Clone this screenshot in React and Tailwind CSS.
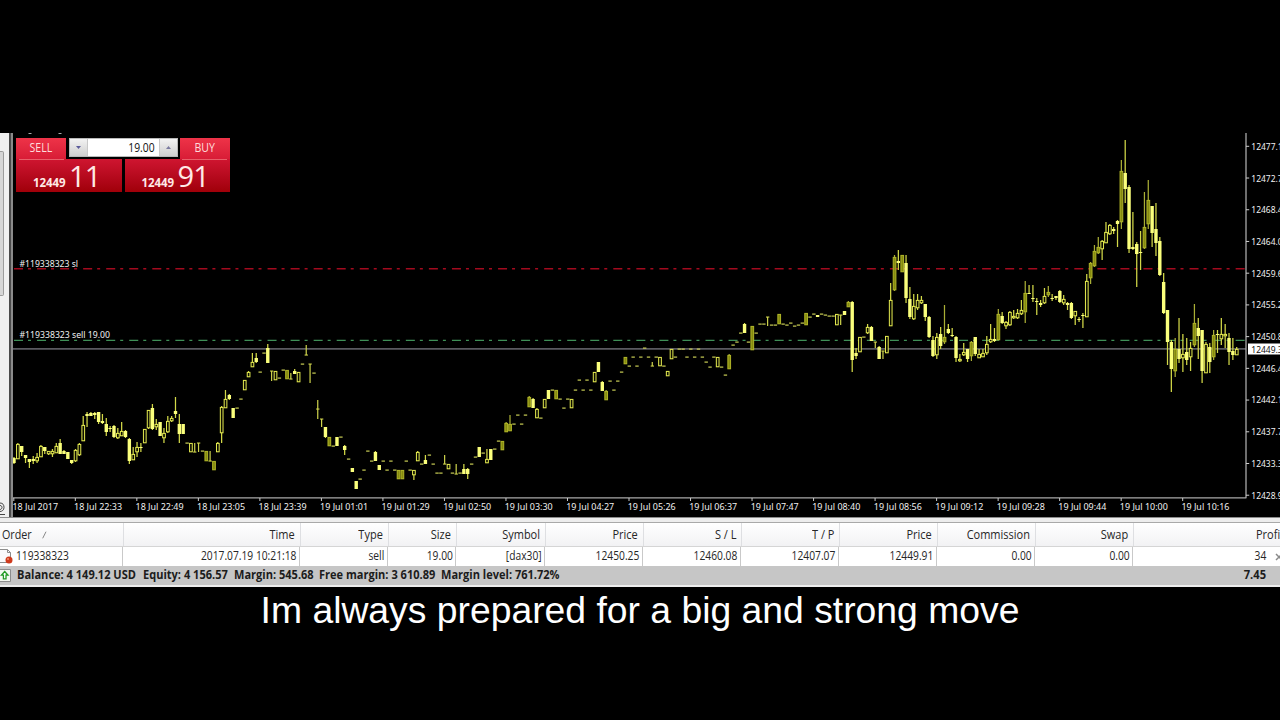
import React from 'react';

// chart geometry
const X0 = 14;
const STEP = 3.845;

// [slot, high, bodyTop, bodyBottom, low, kind]  f = filled, h = hollow, d = dim body
const candles = [
  [0, 457, 458, 463, 464, 'f'], [1, 443, 444, 459, 459, 'h'], [2, 446, 446, 452, 456, 'f'], [3, 455, 455, 458, 463, 'f'],
  [4, 459, 459, 462, 468, 'f'], [5, 456, 459, 461, 464, 'f'], [6, 453, 457, 461, 463, 'h'], [7, 445, 446, 457, 457, 'h'],
  [8, 447, 447, 451, 454, 'f'], [9, 451, 451, 454, 455, 'h'], [10, 449, 451, 454, 457, 'h'], [11, 443, 446, 453, 453, 'h'],
  [12, 439, 443, 454, 454, 'f'], [13, 450, 451, 454, 454, 'f'], [14, 452, 452, 459, 459, 'f'], [15, 460, 460, 463, 464, 'f'],
  [16, 449, 450, 461, 462, 'h'], [17, 443, 444, 455, 456, 'h'], [18, 416, 425, 441, 441, 'h'], [19, 412, 414, 416, 427, 'f'],
  [20, 412, 413, 416, 416, 'f'], [21, 412, 413, 415, 419, 'f'], [22, 412, 412, 422, 424, 'f'], [23, 414, 421, 423, 424, 'f'],
  [24, 418, 424, 432, 436, 'f'], [25, 426, 428, 429, 432, 'f'], [26, 425, 426, 437, 438, 'f'], [27, 428, 433, 438, 439, 'h'],
  [28, 422, 431, 436, 436, 'h'], [29, 430, 431, 437, 438, 'f'], [30, 438, 439, 461, 464, 'f'], [31, 447, 454, 460, 460, 'h'],
  [32, 442, 447, 452, 457, 'h'], [33, 443, 447, 448, 452, 'f'], [34, 429, 429, 443, 443, 'h'], [35, 410, 410, 428, 429, 'h'],
  [36, 404, 408, 429, 430, 'f'], [37, 419, 424, 427, 430, 'h'], [38, 422, 422, 436, 436, 'f'], [39, 428, 433, 438, 443, 'h'],
  [40, 416, 421, 432, 433, 'h'], [41, 416, 418, 421, 422, 'h'], [42, 397, 411, 414, 418, 'f'], [43, 414, 424, 434, 443, 'f'],
  [44, 424, 424, 434, 434, 'f'], [46, 443, 443, 452, 452, 'h'], [50, 451, 451, 461, 461, 'd'], [52, 461, 461, 470, 470, 'd'],
  [53, 442, 443, 452, 452, 'h'], [54, 406, 407, 433, 443, 'h'], [55, 390, 399, 408, 408, 'h'], [56, 394, 395, 399, 400, 'f'],
  [57, 408, 408, 418, 418, 'f'], [60, 380, 380, 390, 390, 'h'], [61, 371, 372, 377, 377, 'h'], [62, 353, 362, 367, 367, 'h'],
  [63, 353, 358, 362, 363, 'f'], [66, 344, 348, 363, 363, 'f'], [68, 371, 371, 380, 380, 'h'], [71, 370, 370, 379, 379, 'd'],
  [73, 369, 371, 374, 374, 'f'], [74, 372, 372, 382, 382, 'h'], [81, 427, 427, 437, 438, 'f'], [82, 437, 437, 446, 446, 'd'],
  [84, 437, 437, 446, 446, 'f'], [86, 445, 446, 450, 455, 'f'], [88, 468, 468, 472, 472, 'f'], [89, 481, 481, 489, 489, 'f'],
  [94, 451, 452, 461, 461, 'f'], [95, 465, 465, 470, 470, 'f'], [100, 470, 470, 479, 479, 'd'], [101, 470, 470, 479, 479, 'd'],
  [104, 470, 470, 475, 480, 'h'], [105, 451, 452, 461, 461, 'h'], [107, 455, 460, 464, 464, 'f'], [113, 464, 464, 469, 469, 'h'],
  [117, 464, 469, 474, 474, 'f'], [118, 468, 469, 474, 479, 'f'], [121, 447, 447, 457, 457, 'f'], [123, 449, 459, 463, 463, 'h'],
  [124, 449, 449, 460, 460, 'f'], [127, 441, 441, 450, 450, 'd'], [128, 422, 423, 432, 432, 'd'], [129, 415, 424, 431, 431, 'd'],
  [134, 396, 397, 407, 407, 'd'], [135, 398, 399, 408, 408, 'f'], [136, 408, 409, 418, 418, 'h'], [138, 399, 399, 408, 408, 'h'],
  [139, 390, 390, 399, 399, 'f'], [141, 390, 390, 399, 399, 'd'], [145, 399, 399, 408, 408, 'h'], [151, 372, 372, 382, 382, 'h'],
  [152, 362, 362, 372, 372, 'f'], [153, 381, 382, 391, 391, 'f'], [154, 390, 391, 400, 400, 'd'], [159, 357, 357, 364, 364, 'd'],
  [168, 357, 357, 366, 366, 'h'], [170, 371, 371, 376, 376, 'h'], [171, 349, 349, 359, 359, 'h'], [183, 357, 357, 367, 367, 'h'],
  [186, 354, 355, 369, 369, 'd'], [190, 323, 324, 333, 333, 'f'], [192, 326, 326, 350, 350, 'd'], [199, 314, 314, 324, 324, 'd'],
  [206, 313, 313, 325, 325, 'd'], [209, 315, 315, 317, 317, 'f'], [214, 314, 314, 325, 325, 'h'], [216, 311, 311, 315, 315, 'f'],
  [217, 301, 302, 307, 307, 'd'], [218, 301, 302, 360, 372, 'f'], [219, 348, 353, 356, 359, 'f'], [220, 337, 337, 352, 352, 'h'],
  [222, 324, 327, 333, 334, 'h'], [223, 326, 327, 341, 341, 'f'], [225, 346, 347, 359, 359, 'f'], [227, 336, 336, 353, 353, 'h'],
  [228, 283, 300, 326, 326, 'h'], [229, 255, 257, 290, 291, 'd'], [230, 250, 261, 263, 270, 'f'], [231, 255, 255, 272, 272, 'd'],
  [232, 255, 263, 298, 303, 'f'], [233, 287, 299, 317, 319, 'f'], [234, 294, 306, 319, 320, 'h'], [235, 294, 300, 308, 310, 'h'],
  [236, 296, 300, 303, 304, 'h'], [237, 304, 304, 317, 321, 'f'], [238, 316, 317, 337, 338, 'f'], [239, 336, 340, 356, 357, 'f'],
  [240, 333, 337, 355, 359, 'h'], [241, 327, 334, 346, 349, 'f'], [242, 305, 337, 342, 344, 'd'], [243, 324, 329, 333, 334, 'f'],
  [244, 328, 335, 336, 337, 'f'], [245, 336, 337, 358, 362, 'f'], [246, 354, 359, 361, 362, 'h'], [247, 343, 352, 355, 356, 'h'],
  [248, 349, 349, 359, 362, 'f'], [249, 341, 342, 356, 361, 'd'], [250, 337, 337, 354, 356, 'f'], [251, 349, 354, 358, 358, 'h'],
  [252, 349, 353, 357, 357, 'h'], [253, 336, 344, 353, 355, 'h'], [254, 324, 339, 342, 343, 'h'], [255, 328, 339, 341, 342, 'f'],
  [256, 309, 314, 340, 340, 'd'], [257, 312, 316, 323, 324, 'f'], [258, 321, 322, 326, 329, 'h'], [259, 311, 312, 325, 326, 'h'],
  [260, 310, 316, 318, 319, 'h'], [261, 309, 313, 318, 319, 'h'], [262, 300, 310, 314, 315, 'h'], [263, 281, 293, 312, 323, 'd'],
  [264, 285, 293, 294, 294, 'f'], [265, 285, 298, 299, 302, 'f'], [266, 298, 301, 302, 315, 'f'], [267, 300, 303, 305, 307, 'f'],
  [268, 288, 296, 303, 304, 'h'], [269, 286, 292, 295, 297, 'd'], [270, 294, 298, 299, 301, 'f'], [271, 296, 296, 298, 300, 'f'],
  [272, 290, 291, 302, 303, 'f'], [273, 295, 299, 303, 305, 'h'], [274, 302, 303, 305, 310, 'f'], [275, 302, 303, 318, 319, 'f'],
  [276, 311, 311, 316, 325, 'h'], [277, 317, 319, 320, 322, 'f'], [278, 313, 315, 316, 328, 'f'], [279, 274, 281, 317, 317, 'h'],
  [280, 262, 263, 278, 284, 'd'], [281, 245, 251, 266, 267, 'd'], [282, 237, 247, 253, 254, 'd'], [283, 240, 241, 249, 260, 'h'],
  [284, 222, 232, 243, 243, 'h'], [285, 224, 225, 234, 235, 'h'], [286, 227, 229, 231, 234, 'f'], [287, 220, 221, 224, 247, 'f'],
  [288, 160, 171, 222, 229, 'd'], [289, 140, 173, 189, 203, 'f'], [290, 185, 187, 249, 253, 'f'], [291, 212, 247, 249, 250, 'f'],
  [292, 242, 244, 254, 287, 'f'], [293, 231, 252, 253, 270, 'f'], [294, 192, 227, 248, 249, 'd'], [295, 180, 200, 224, 229, 'd'],
  [296, 206, 206, 233, 247, 'f'], [297, 203, 229, 243, 256, 'f'], [298, 237, 241, 275, 276, 'f'], [299, 273, 282, 313, 314, 'f'],
  [300, 310, 310, 342, 365, 'f'], [301, 340, 342, 369, 392, 'f'], [302, 338, 349, 371, 377, 'd'], [303, 318, 349, 359, 363, 'f'],
  [304, 334, 354, 358, 372, 'h'], [305, 338, 352, 360, 365, 'f'], [306, 342, 348, 357, 371, 'h'], [307, 304, 323, 345, 347, 'd'],
  [308, 318, 328, 336, 359, 'f'], [309, 330, 330, 371, 383, 'f'], [310, 342, 344, 373, 373, 'h'], [311, 343, 347, 362, 373, 'f'],
  [312, 330, 335, 357, 360, 'd'], [313, 330, 334, 335, 353, 'f'], [314, 318, 334, 339, 345, 'h'], [315, 324, 334, 336, 348, 'h'],
  [316, 333, 338, 352, 365, 'f'], [317, 338, 351, 355, 360, 'f'], [318, 347, 349, 355, 355, 'h'],
];

// bars without a body: [slot, high, low, crossbar]
const wicks = [
  [47, 443, 452, 452], [48, 443, 452, 443], [51, 451, 461, 461], [67, 371, 381, 371], [72, 373, 379, 379], [76, 345, 355, 355],
  [77, 364, 383, 364], [79, 400, 419, 409], [80, 419, 427, 419], [112, 455, 464, 464], [115, 464, 474, 474], [166, 362, 366, 366],
  [196, 317, 326, 317], [215, 315, 325, 315], [224, 342, 348, 342], [226, 351, 359, 351],
];

// single tick bars: [slot, y]
const dashes = [
  [45, 443], [49, 451], [58, 408], [59, 399], [64, 372], [65, 353], [69, 378], [70, 370], [75, 364], [78, 373], [83, 446], [85, 437],
  [87, 459], [90, 479], [91, 470], [92, 451], [93, 461], [96, 461], [97, 470], [98, 461], [99, 470], [102, 461], [103, 470],
  [106, 464], [108, 455], [109, 464], [110, 473], [111, 473], [114, 473], [116, 473], [119, 464], [120, 457], [122, 453], [125, 449],
  [126, 441], [130, 424], [131, 415], [132, 424], [133, 415], [137, 418], [140, 390], [142, 399], [143, 408], [144, 399], [146, 390],
  [147, 380], [148, 390], [149, 380], [150, 390], [155, 381], [156, 390], [157, 381], [158, 372], [160, 366], [161, 357], [162, 366],
  [163, 357], [164, 348], [165, 357], [167, 357], [169, 366], [172, 357], [173, 349], [174, 349], [175, 357], [176, 349], [177, 357],
  [178, 349], [179, 357], [180, 362], [181, 367], [182, 357], [184, 367], [185, 375], [187, 345], [188, 342], [189, 333], [191, 342],
  [193, 333], [194, 324], [195, 324], [197, 325], [198, 325], [200, 324], [201, 325], [202, 323], [203, 326], [204, 325], [205, 323],
  [207, 317], [208, 314], [210, 314], [211, 315], [212, 316], [213, 316], [221, 337],
];

const times = [
  '18 Jul 2017', '18 Jul 22:33', '18 Jul 22:49', '18 Jul 23:05', '18 Jul 23:39', '19 Jul 01:01', '19 Jul 01:29',
  '19 Jul 02:50', '19 Jul 03:30', '19 Jul 04:27', '19 Jul 05:26', '19 Jul 06:37', '19 Jul 07:47', '19 Jul 08:40',
  '19 Jul 08:56', '19 Jul 09:12', '19 Jul 09:28', '19 Jul 09:44', '19 Jul 10:00', '19 Jul 10:16',
];

const prices = [
  '12477.15', '12472.75', '12468.40', '12464.00', '12459.60', '12455.25', '12450.85', '12446.45', '12442.10', '12437.70', '12433.30', '12428.95',
];

const columns = [
  { title: 'Time', value: '2017.07.19 10:21:18', width: 'w-[177px]' },
  { title: 'Type', value: 'sell', width: 'w-[88px]' },
  { title: 'Size', value: '19.00', width: 'w-[68px]' },
  { title: 'Symbol', value: '[dax30]', width: 'w-[89px]' },
  { title: 'Price', value: '12450.25', width: 'w-[98px]' },
  { title: 'S / L', value: '12460.08', width: 'w-[98px]' },
  { title: 'T / P', value: '12407.07', width: 'w-[98px]' },
  { title: 'Price', value: '12449.91', width: 'w-[98px]' },
  { title: 'Commission', value: '0.00', width: 'w-[98px]' },
  { title: 'Swap', value: '0.00', width: 'w-[98px]' },
];

function Candle({ data }) {
  const [slot, high, top, bottom, low, kind] = data;
  const x = X0 + slot * STEP;
  const fill = kind === 'f' ? '#fbff7c' : kind === 'd' ? '#858a10' : '#0c0d00';
  const stroke = kind === 'd' ? '#b0b528' : '#e6ec50';
  return (
    <g>
      <line x1={x} x2={x} y1={high} y2={low} stroke={kind === 'd' ? '#a9ae35' : '#d3d948'} strokeWidth="1.25" />
      {kind === 'f' ? (
        <rect x={x - 1.7} y={top} width="3.4" height={Math.max(bottom - top, 1)} fill={fill} />
      ) : (
        <rect x={x - 1.3} y={top + 0.4} width="2.7" height={Math.max(bottom - top - 0.6, 1)} fill={fill} stroke={stroke} strokeWidth="1" />
      )}
    </g>
  );
}

function Chart() {
  return (
    <svg className="block h-[384px] w-[1267px] shrink-0 bg-black" viewBox="13 133 1267 384" fontFamily="'Noto Sans', 'Open Sans', sans-serif" fontSize="9.5">
      {/* clipped title */}
      <path d="M28.5 133.5h3M58.5 133.5h3" stroke="#aaa" />

      {/* order and bid levels */}
      <line x1="14" x2="1245" y1="268.8" y2="268.8" stroke="#a30a1e" strokeWidth="1.4" strokeDasharray="9 5 3 6.05" />
      <line x1="14" x2="1245" y1="340.4" y2="340.4" stroke="#3f8f57" strokeWidth="1.3" strokeDasharray="9 5 3 6.05" />
      <line x1="13" x2="1246" y1="348.9" y2="348.9" stroke="#5a5a60" strokeWidth="1.6" />

      {/* bars */}
      {dashes.map(([slot, y]) => (
        <rect key={slot} x={X0 + slot * STEP - 1.6} y={y - 0.5} width="3.4" height="1.2" fill="#c9ce55" />
      ))}
      {wicks.map(([slot, high, low, bar]) => (
        <g key={slot} fill="#cfd44c">
          <rect x={X0 + slot * STEP - 0.6} y={high} width="1.2" height={low - high} />
          <rect x={X0 + slot * STEP - 1.6} y={bar - 0.5} width="3.3" height="1.1" />
        </g>
      ))}
      {candles.map((c) => (
        <Candle key={c[0]} data={c} />
      ))}

      {/* level labels */}
      <g fill="#f0f0f0">
        <text x="19.5" y="266.8" textLength="58.5" lengthAdjust="spacingAndGlyphs">#119338323 sl</text>
        <text x="19.5" y="338.2" textLength="90.5" lengthAdjust="spacingAndGlyphs">#119338323 sell 19.00</text>
      </g>

      {/* axes */}
      <path d="M13 497.9H1246.4M1246 133V498" fill="none" stroke="#a8a8a8" strokeWidth="1.3" />
      <g fill="#f0f0f0">
        {times.map((t, i) => (
          <g key={t}>
            <rect x={13.3 + i * 61.52} y="498" width="1" height="3" fill="#ccc" />
            <text x={12.5 + i * 61.52} y="510.2" textLength={i === 0 ? 45.5 : 48} lengthAdjust="spacingAndGlyphs">{t}</text>
          </g>
        ))}
        {prices.map((p, i) => (
          <g key={p}>
            <rect x="1246" y={145.8 + i * 31.72} width="3.2" height="1" fill="#ccc" />
            <text x="1251.3" y={149.8 + i * 31.7} textLength="36.2" lengthAdjust="spacingAndGlyphs">{p}</text>
          </g>
        ))}
      </g>
      <rect x="1248" y="343.5" width="32" height="11" fill="#fff" />
      <text x="1251.3" y="352.5" fill="#111" textLength="36.2" lengthAdjust="spacingAndGlyphs">12449.31</text>
    </svg>
  );
}

function QuoteButton({ base, pips }) {
  return (
    <div className="flex h-[33px] flex-1 items-baseline gap-[2px] bg-linear-to-b from-[#cf1530] to-[#a00008] pl-[17px] leading-[33px] text-[#ffe9e6]">
      <span className="w-[34px] text-[11.5px] font-bold tracking-[-0.1px]">{base}</span>
      <span className="text-[29px] tracking-[-0.8px]">{pips}</span>
    </div>
  );
}

function OneClickPanel() {
  return (
    <div className="absolute left-[16px] top-[5px] w-[214px] font-['Open_Sans',sans-serif]">
      <div className="flex h-[21px] justify-between">
        <div className="h-[21px] w-[50px] bg-linear-to-b from-[#ee3348] to-[#d81c36] text-center text-[12px] leading-[20px] text-[#ffdcdc]">
          <span className="inline-block scale-x-[0.88]">SELL</span>
        </div>
        <div className="flex h-[19px] w-[109px] border border-[#b8b8b8] bg-white">
          <div className="flex w-[18px] items-center justify-center border-r border-[#c8c8c8] bg-linear-to-b from-[#f2f2f2] to-[#cfcfcf]">
            <svg width="5" height="3" viewBox="0 0 5 3"><path d="M0 0h5L2.5 3z" fill="#5a5a9a" /></svg>
          </div>
          <div className="flex-1 pr-[4px] text-right text-[12px] leading-[17px] text-[#111]">
            <span className="inline-block origin-right scale-x-[0.86]">19.00</span>
          </div>
          <div className="flex w-[18px] items-center justify-center border-l border-[#c8c8c8] bg-linear-to-b from-[#f2f2f2] to-[#cfcfcf]">
            <svg width="5" height="3" viewBox="0 0 5 3"><path d="M0 3h5L2.5 0z" fill="#7a7aa0" /></svg>
          </div>
        </div>
        <div className="h-[21px] w-[50px] bg-linear-to-b from-[#ee3348] to-[#d81c36] text-center text-[12px] leading-[20px] text-[#ffdcdc]">
          <span className="inline-block scale-x-[0.88]">BUY</span>
        </div>
      </div>
      <div className="relative z-10 flex justify-between">
        <div className="ml-[3px] h-px w-[45px] bg-[#e8606a]" />
        <div className="mr-[3px] h-px w-[45px] bg-[#e8606a]" />
      </div>
      <div className="-mt-px flex gap-[3px]">
        <QuoteButton base="12449" pips="11" />
        <QuoteButton base="12449" pips="91" />
      </div>
    </div>
  );
}

function Terminal() {
  return (
    <section className="h-[70px] overflow-hidden bg-[#ededed] font-['Open_Sans',sans-serif] text-[12.5px] text-[#262626]">
      <div className="h-[6px] border-b border-t border-b-[#a9a9a9] border-t-[#8c8c8c]" />

      {/* Column titles */}
      <div className="flex h-[24px] w-[1340px] border-b border-[#d5d5d5] bg-linear-to-b from-white to-[#f2f2f4] leading-[23px]">
        <div className="flex w-[124px] shrink-0 border-r border-[#dedfe2] pl-[2px]">
          <span className="w-[40px] origin-left scale-x-[0.86]">Order</span>
          <svg className="mt-[8px]" width="5" height="8" viewBox="0 0 5 8"><path d="M.7 7.3 4 .7" stroke="#888" fill="none" /></svg>
        </div>
        {columns.map((c, i) => (
          <div key={i} className={`${c.width} shrink-0 border-r border-[#dedfe2] pr-[5px] text-right`}>
            <span className="inline-block origin-right scale-x-[0.88]">{c.title}</span>
          </div>
        ))}
        <div className="pl-[122px]">
          <span className="inline-block origin-left scale-x-[0.88]">Profit</span>
        </div>
      </div>

      {/* Open order */}
      <div className="flex h-[19px] w-[1340px] bg-white leading-[18px]">
        <div className="flex w-[123px] shrink-0 border-r border-[#c9c9c9]">
          <svg className="mr-[3px] shrink-0" width="13" height="19" viewBox="0 0 13 19">
            <path d="M0 2.5h7.5l3 3v10H0" fill="#fafafa" stroke="#8d8d8d" />
            <path d="M7.5 2.5v3h3" fill="none" stroke="#8d8d8d" />
            <circle cx="9" cy="13" r="3.5" fill="#cf3a1c" />
            <circle cx="8" cy="12" r="1.1" fill="#f08a6a" />
          </svg>
          <span className="origin-left scale-x-[0.82]">119338323</span>
        </div>
        {columns.map((c, i) => (
          <div key={i} className={`flex ${c.width} shrink-0 justify-end border-r border-[#c9c9c9] pr-[2.5px]`}>
            <span className="origin-right scale-x-[0.82] whitespace-nowrap">{c.value}</span>
          </div>
        ))}
        <div className="w-[133px] text-right">
          <span className="inline-block origin-right scale-x-[0.82]">34</span>
        </div>
        <svg className="ml-[9px] mt-[6px]" width="8" height="8" viewBox="0 0 8 8"><path d="m1 1 6 6M7 1 1 7" stroke="#8a8a8a" strokeWidth="1.5" /></svg>
      </div>

      {/* Account summary */}
      <div className="flex h-[19px] bg-[#c6c6c6] text-[12px] font-bold leading-[18px] text-[#1c1c1c]">
        <svg className="mr-[6px] shrink-0" width="11" height="19" viewBox="0 0 11 19">
          <path d="M0 3.5h10.5v12H0" fill="#f4f8f0" stroke="#8d8d8d" />
          <path d="M4.7 5.5 8 9.2H6v3.6H3.4V9.2h-2z" fill="#fff" stroke="#239b23" strokeWidth="1.3" />
        </svg>
        <div className="w-[126px] whitespace-nowrap"><span className="inline-block origin-left scale-x-[0.92]">Balance: 4 149.12 USD</span></div>
        <div className="w-[90.5px] whitespace-nowrap"><span className="inline-block origin-left scale-x-[0.92]">Equity: 4 156.57</span></div>
        <div className="w-[85.5px] whitespace-nowrap"><span className="inline-block origin-left scale-x-[0.92]">Margin: 545.68</span></div>
        <div className="w-[122px] whitespace-nowrap"><span className="inline-block origin-left scale-x-[0.92]">Free margin: 3 610.89</span></div>
        <div className="whitespace-nowrap"><span className="inline-block origin-left scale-x-[0.92]">Margin level: 761.72%</span></div>
        <div className="ml-auto pr-[14px]"><span className="inline-block origin-right scale-x-[0.93]">7.45</span></div>
      </div>
    </section>
  );
}

export default function App() {
  return (
    <div className="h-[720px] w-[1280px] overflow-hidden bg-black pt-[133px]">
      {/* Chart window */}
      <main className="relative flex h-[384px]">
        <aside className="flex w-[13px] shrink-0 bg-[#f0f0f0]">
          <div className="flex w-[9px] flex-col">
            <div className="h-[18px]" />
            <div className="h-[145px] w-[4px] rounded-r-[2px] border border-l-0 border-[#9c9c9c] bg-[#d6d6d6]" />
            <svg className="mt-[204px]" width="6" height="16" viewBox="0 0 6 16">
              <path d="M0 3c3 0 4 2 4 4.500s-2 4-4 4M0 5.500c1.500 0 2 1 2 2s-1 2-2 2M0 14.500h5" fill="none" stroke="#444" />
            </svg>
          </div>
          <div className="w-[2px] bg-[#4a4a4a]" />
          <div className="w-[2px] bg-[#8a8a8a]" />
        </aside>
        <Chart />
        <OneClickPanel />
      </main>

      <Terminal />

      {/* Subtitle */}
      <p className="mt-[2px] whitespace-nowrap text-center font-['Liberation_Sans',Arial,sans-serif] text-[37.3px] leading-[42px] text-white">
        Im always prepared for a big and strong move
      </p>
    </div>
  );
}
